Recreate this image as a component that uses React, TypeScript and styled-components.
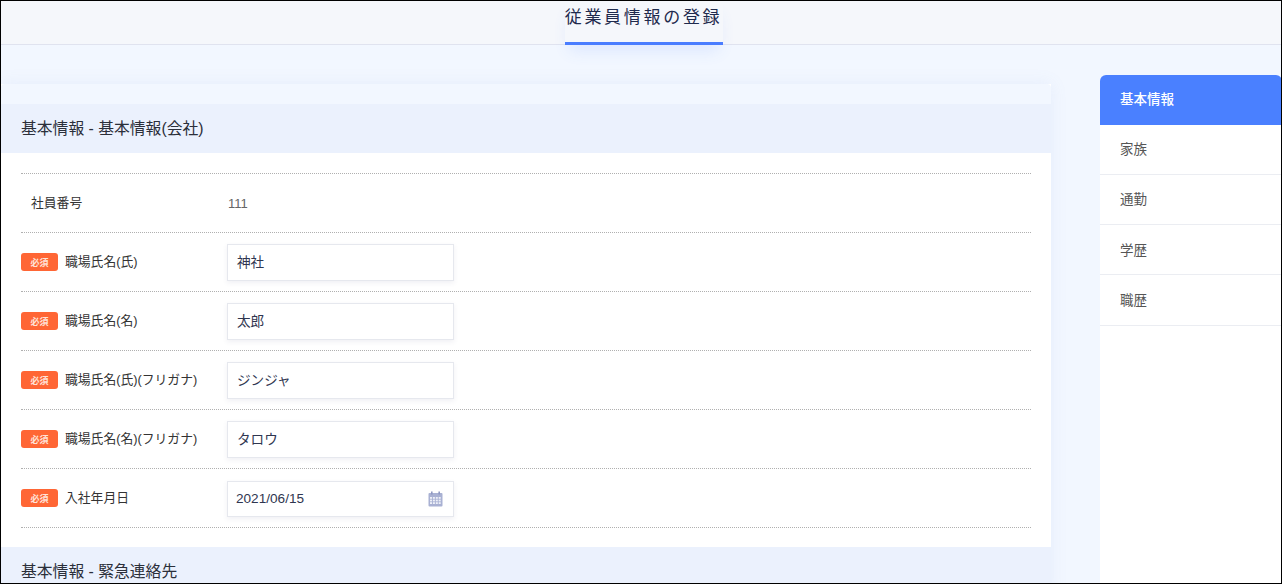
import React from "react";
import styled, { createGlobalStyle } from "styled-components";

const Global = createGlobalStyle`
  html, body { margin: 0; padding: 0; }
  body { font-family: "Liberation Sans", "Noto Sans CJK JP", sans-serif; background: #f2f7ff; }
`;

const Frame = styled.div`
  box-sizing: border-box;
  width: 1282px;
  height: 584px;
  border: 1px solid #000;
  overflow: hidden;
  background: #f2f7ff;
  display: flex;
  flex-direction: column;
  opacity: 0.999;
`;

const Header = styled.header`
  flex: none;
  height: 44px;
  box-sizing: border-box;
  background: #f5f7fb;
  border-bottom: 1px solid #e0e3ef;
  display: flex;
  justify-content: center;
  padding-left: 5px;
`;

const HeaderTitle = styled.h1`
  margin: 0;
  width: 158px;
  height: 44px;
  box-sizing: border-box;
  padding-top: 5px;
  text-align: center;
  font-size: 17px;
  line-height: 24px;
  font-weight: 400;
  letter-spacing: 2.7px;
  white-space: nowrap;
  color: #1f2a4d;
  border-bottom: 3px solid #4a7dff;
  box-shadow: 0 10px 16px -4px rgba(74, 125, 255, 0.12);
`;

const Body = styled.div`
  flex: 1;
  min-height: 0;
  display: flex;
  align-items: flex-start;
`;

const Main = styled.main`
  flex: none;
  width: 1050px;
  margin-top: 39px;
  background: #fff;
  box-shadow: 0 0 16px rgba(120, 150, 220, 0.1);
`;

const CardTop = styled.div`
  height: 20px;
  background: #f2f7ff;
  border-radius: 4px 4px 0 0;
`;

const SectionHead = styled.h2`
  margin: 0;
  height: 49px;
  box-sizing: border-box;
  padding: 0 20px 3px;
  display: flex;
  align-items: center;
  background: #ebf1fd;
  font-size: 15.8px;
  font-weight: 400;
  color: #2b2f3a;
`;

const Rows = styled.div`
  padding: 20px 20px 19px;
`;

const Row = styled.div`
  height: 59px;
  box-sizing: border-box;
  border-top: 1px dotted #b0b0b0;
  display: flex;
  align-items: center;
  &:last-child {
    height: 60px;
    border-bottom: 1px dotted #b0b0b0;
  }
`;

const LabelCell = styled.div<{ $plain?: boolean }>`
  flex: none;
  width: 206px;
  box-sizing: border-box;
  padding-left: ${(p) => (p.$plain ? "10px" : "0")};
  padding-bottom: ${(p) => (p.$plain ? "2px" : "0")};
  display: flex;
  align-items: center;
  gap: 7px;
  font-size: 12.8px;
  color: #333;
  margin-top: -2px;
`;

const Required = styled.span`
  width: 37px;
  height: 18px;
  margin-top: 2px;
  border-radius: 3px;
  background: #ff6635;
  color: #ffe3d8;
  font-size: 9px;
  font-weight: 700;
  display: flex;
  align-items: center;
  justify-content: center;
`;

const LabelText = styled.span`
  margin-top: -1px;
`;

const Value = styled.div`
  font-size: 13px;
  color: #666;
  padding-left: 1px;
`;

const Field = styled.div<{ $date?: boolean }>`
  width: 227px;
  height: ${(p) => (p.$date ? "36px" : "37px")};
  box-sizing: border-box;
  border: 1px solid #e6e8ee;
  background: #fff;
  box-shadow: 0 2px 5px rgba(60, 70, 110, 0.08);
  padding: 0 8px ${(p) => (p.$date ? "1px" : "3px")};
  padding-left: ${(p) => (p.$date ? "8px" : "9px")};
  margin-top: ${(p) => (p.$date ? "2px" : "0")};
  display: flex;
  align-items: center;
  justify-content: space-between;
  font-size: 13.6px;
  color: #2f3650;
`;

const CalendarIcon = styled.svg`
  width: 15px;
  height: 16px;
  margin-right: 2px;
`;

const Side = styled.nav`
  flex: none;
  width: 182px;
  margin-left: 49px;
  margin-top: 30px;
  height: 600px;
  background: #fff;
  border-radius: 6px 6px 0 0;
  overflow: hidden;
`;

const SideItem = styled.div<{ $active?: boolean }>`
  height: ${(p) => (p.$active ? "49.5px" : "50.3px")};
  box-sizing: border-box;
  padding: 0 0 ${(p) => (p.$active ? "3px" : "2px")} 20px;
  display: flex;
  align-items: center;
  font-size: 13.5px;
  font-weight: ${(p) => (p.$active ? 500 : 400)};
  color: ${(p) => (p.$active ? "#fff" : "#555")};
  background: ${(p) => (p.$active ? "#4a80ff" : "#fff")};
  border-bottom: ${(p) => (p.$active ? "none" : "1px solid #ebedf2")};
`;

const fields = [
  ["職場氏名(氏)", "神社"],
  ["職場氏名(名)", "太郎"],
  ["職場氏名(氏)(フリガナ)", "ジンジャ"],
  ["職場氏名(名)(フリガナ)", "タロウ"],
];

const Calendar = () => (
  <CalendarIcon viewBox="0 0 15 16">
    <rect x="0.5" y="2" width="14" height="13.5" rx="1" fill="#a9b1d3" />
    <rect x="3" y="0.5" width="1.6" height="3" fill="#8f98c2" />
    <rect x="10.4" y="0.5" width="1.6" height="3" fill="#8f98c2" />
    {[6, 8.6, 11.2].map((y) =>
      [2, 4.9, 7.8, 10.7].map((x) => (
        <rect key={`${x}-${y}`} x={x} y={y} width="2" height="1.8" fill="#eef0f8" />
      ))
    )}
  </CalendarIcon>
);

export default function App() {
  return (
    <Frame>
      <Global />
      <Header>
        <HeaderTitle>従業員情報の登録</HeaderTitle>
      </Header>
      <Body>
        <Main>
          <CardTop />
          <SectionHead>基本情報 - 基本情報(会社)</SectionHead>
          <Rows>
            <Row>
              <LabelCell $plain>社員番号</LabelCell>
              <Value>111</Value>
            </Row>
            {fields.map(([label, value]) => (
              <Row key={label}>
                <LabelCell>
                  <Required>必須</Required>
                  <LabelText>{label}</LabelText>
                </LabelCell>
                <Field>{value}</Field>
              </Row>
            ))}
            <Row>
              <LabelCell>
                <Required>必須</Required>
                <LabelText>入社年月日</LabelText>
              </LabelCell>
              <Field $date>
                2021/06/15
                <Calendar />
              </Field>
            </Row>
          </Rows>
          <SectionHead>基本情報 - 緊急連絡先</SectionHead>
        </Main>
        <Side>
          <SideItem $active>基本情報</SideItem>
          <SideItem>家族</SideItem>
          <SideItem>通勤</SideItem>
          <SideItem>学歴</SideItem>
          <SideItem>職歴</SideItem>
        </Side>
      </Body>
    </Frame>
  );
}
